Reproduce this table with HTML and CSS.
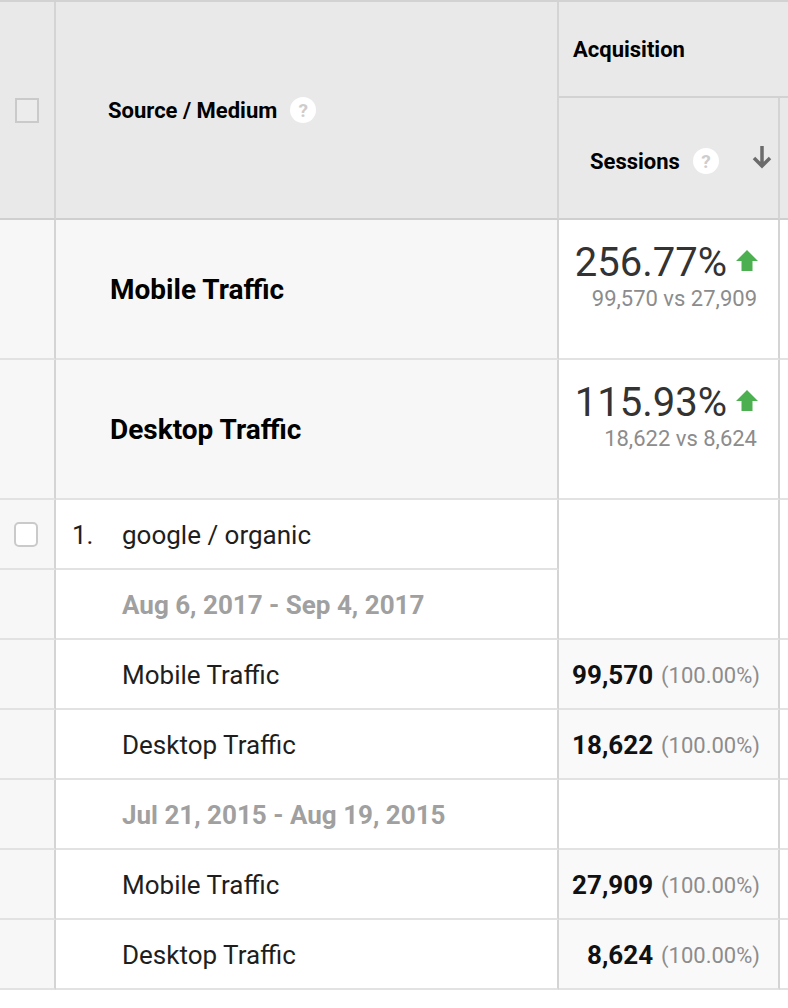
FILE: index.html
```html
<!DOCTYPE html>
<html lang="en">
<head>
<meta charset="utf-8">
<title>Source / Medium report</title>
<link rel="stylesheet" href="styles.css">
</head>
<body>
<div class="report">
  <!-- header -->
  <div class="cell head check-col span-rows"><span class="cb cb-head"></span></div>
  <div class="cell head dim-col span-rows head-dim">
    <span class="head-label">Source / Medium</span>
    <span class="help">?</span>
  </div>
  <div class="cell head group span-cols"><span class="head-label">Acquisition</span></div>
  <div class="cell head metric-head">
    <span class="head-label">Sessions</span>
    <span class="help">?</span>
    <svg class="sort" viewBox="0 0 22 26" width="22" height="26"><path d="M11 2V22M3 14L11 22L19 14"/></svg>
  </div>
  <div class="cell head extra"></div>

  <!-- summary rows -->
  <div class="cell summary check-col"></div>
  <div class="cell summary dim-col sum-label">Mobile Traffic</div>
  <div class="cell summary-metric">
    <div class="pct">256.77%<svg class="up" viewBox="0 0 22 21" width="22" height="21"><path d="M11 0L22 11H16.5V21H5.5V11H0Z"/></svg></div>
    <div class="vs">99,570 vs 27,909</div>
  </div>
  <div class="cell blank extra"></div>

  <div class="cell summary check-col"></div>
  <div class="cell summary dim-col sum-label">Desktop Traffic</div>
  <div class="cell summary-metric">
    <div class="pct">115.93%<svg class="up" viewBox="0 0 22 21" width="22" height="21"><path d="M11 0L22 11H16.5V21H5.5V11H0Z"/></svg></div>
    <div class="vs">18,622 vs 8,624</div>
  </div>
  <div class="cell blank extra"></div>

  <!-- data rows -->
  <div class="cell side check-col cb-cell"><span class="cb cb-row"></span></div>
  <div class="cell row dim-col"><span class="idx">1.</span>google / organic</div>
  <div class="cell blank span-rows"></div>
  <div class="cell blank extra span-rows"></div>

  <div class="cell side check-col"></div>
  <div class="cell row dim-col indent date">Aug 6, 2017 - Sep 4, 2017</div>

  <div class="cell side check-col"></div>
  <div class="cell row dim-col indent">Mobile Traffic</div>
  <div class="cell value"><b>99,570</b><span class="share">(100.00%)</span></div>
  <div class="cell blank extra"></div>

  <div class="cell side check-col"></div>
  <div class="cell row dim-col indent">Desktop Traffic</div>
  <div class="cell value"><b>18,622</b><span class="share">(100.00%)</span></div>
  <div class="cell blank extra"></div>

  <div class="cell side check-col"></div>
  <div class="cell row dim-col indent date">Jul 21, 2015 - Aug 19, 2015</div>
  <div class="cell blank"></div>
  <div class="cell blank extra"></div>

  <div class="cell side check-col"></div>
  <div class="cell row dim-col indent">Mobile Traffic</div>
  <div class="cell value"><b>27,909</b><span class="share">(100.00%)</span></div>
  <div class="cell blank extra"></div>

  <div class="cell side check-col"></div>
  <div class="cell row dim-col indent">Desktop Traffic</div>
  <div class="cell value"><b>8,624</b><span class="share">(100.00%)</span></div>
  <div class="cell blank extra"></div>
</div>
</body>
</html>
```

FILE: styles.css
```css
html, body {
  margin: 0;
  padding: 0;
  background: #ffffff;
  overflow: hidden;
}

body {
  font-family: Roboto, "Liberation Sans", Arial, sans-serif;
  color: #222222;
}

.report {
  display: grid;
  grid-template-columns: 56px 503px 221px 8px;
  grid-template-rows: 96px 122px 140px 140px repeat(7, 70px);
  width: 788px;
  border-top: 2px solid #d2d2d2;
}

.cell {
  box-sizing: border-box;
  border-right: 2px solid #d4d4d4;
  border-bottom: 2px solid #e2e2e2;
  display: flex;
  align-items: center;
  min-width: 0;
}

.span-rows { grid-row: span 2; }
.span-cols { grid-column: span 2; }

/* header */
.head {
  background: #e9e9e9;
  border-bottom-color: #cfcfcf;
  color: #000000;
}

.head-label {
  font-size: 22px;
  font-weight: 700;
  white-space: nowrap;
}

.check-col {
  justify-content: flex-start;
  padding-left: 15px;
}

.head-dim {
  padding-left: 52px;
}

.group {
  padding-left: 14px;
  border-right: none;
  border-bottom-color: #d2d2d2;
}

.metric-head {
  padding-left: 31px;
  padding-top: 6px;
  padding-right: 5px;
}

.extra {
  border-right: none;
}

.help {
  width: 26px;
  height: 26px;
  border-radius: 50%;
  background: #ffffff;
  color: #cdcdcd;
  font-size: 19px;
  font-weight: 700;
  display: inline-flex;
  align-items: center;
  justify-content: center;
  margin-left: 13px;
  flex: none;
}

.sort {
  margin-left: auto;
  fill: none;
  stroke: #6b6b6b;
  stroke-width: 3.5;
  flex: none;
  margin-top: -8px;
}

/* checkboxes */
.cb {
  display: block;
  box-sizing: border-box;
  width: 24px;
  height: 25px;
  border: 2px solid #cacaca;
}

.cb-head {
  background: #ececec;
}

.cb-row {
  background: #ffffff;
  border-radius: 5px;
}

/* summary */
.summary {
  background: #f7f7f7;
}

.sum-label {
  padding-left: 54px;
  font-size: 28px;
  font-weight: 700;
  color: #000000;
}

.summary-metric {
  box-sizing: border-box;
  border-right: 2px solid #d4d4d4;
  border-bottom: 2px solid #e2e2e2;
  background: #ffffff;
  display: flex;
  flex-direction: column;
  align-items: flex-end;
  padding: 19px 20px 0 0;
}

.pct {
  font-size: 40px;
  color: #333333;
  display: flex;
  align-items: center;
  gap: 9px;
}

.up {
  fill: #4caf50;
  margin-top: -4px;
}

.vs {
  font-size: 22px;
  color: #8c8c8c;
  margin-right: 1px;
}

/* data rows */
.side {
  background: #f7f7f7;
}

.cb-cell {
  padding-left: 14px;
}

.row {
  background: #ffffff;
  font-size: 26px;
  color: #1e1e1e;
  padding-left: 16px;
  padding-top: 2px;
}

.indent {
  padding-left: 66px;
}

.idx {
  display: inline-block;
  width: 50px;
}

.date {
  font-weight: 700;
  color: #a0a0a0;
}

.blank {
  background: #ffffff;
}

.value {
  background: #f9f9f9;
  justify-content: flex-end;
  padding-right: 18px;
  padding-top: 2px;
  font-size: 26px;
  color: #111111;
  white-space: nowrap;
}

.value b {
  font-weight: 700;
}

.share {
  font-size: 22px;
  color: #8c8c8c;
  margin-left: 8px;
}
```
